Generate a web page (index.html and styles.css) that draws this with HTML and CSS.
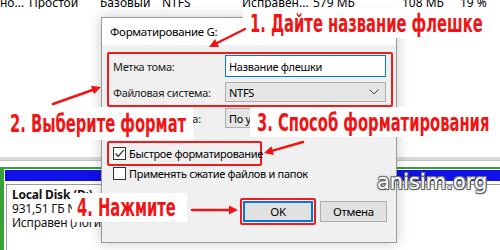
FILE: index.html
```html
<!DOCTYPE html>
<html lang="ru">
<head>
<meta charset="utf-8">
<title>Форматирование флешки</title>
<link rel="stylesheet" href="styles.css">
</head>
<body>
<div class="screen">
  <div class="app">
    <div class="list-row">
      <span class="c c1">но...</span>
      <span class="c c2">Простой</span>
      <span class="c c3">Базовый</span>
      <span class="c c4">NTFS</span>
      <span class="c c5">Исправен...</span>
      <span class="c c6">579 МБ</span>
      <span class="c c7">108 МБ</span>
      <span class="c c8">19 %</span>
    </div>
    <div class="list-rest"></div>
    <div class="splitter"></div>
    <div class="disk">
      <div class="part">
        <div class="part-bar"></div>
        <div class="part-body">
          <div class="part-name">Local Disk (D:)</div>
          <div>931,51 ГБ NTFS</div>
          <div>Исправен (Логический диск)</div>
        </div>
      </div>
    </div>
  </div>

  <div class="dialog">
    <div class="titlebar">Форматирование G:</div>
    <div class="dlg-body">
      <div class="mark mark-fields">
        <div class="field">
          <span class="flabel">Метка тома:</span>
          <div class="input">Название флешки</div>
        </div>
        <div class="field">
          <span class="flabel">Файловая система:</span>
          <div class="select">NTFS
            <svg class="chev" width="10" height="6" viewBox="0 0 10 6"><path d="M0.5 0.5 L5 5 L9.5 0.5" fill="none" stroke="#444" stroke-width="1"/></svg>
          </div>
        </div>
      </div>
      <div class="field field-plain">
        <span class="flabel">Размер кластера:</span>
        <div class="select">По умолчанию</div>
      </div>
      <div class="mark mark-check">
        <div class="check">
          <span class="box"><svg width="11" height="11" viewBox="0 0 11 11"><path d="M1.5 5.5 L4.2 8.3 L9.6 2.2" fill="none" stroke="#222" stroke-width="1.2"/></svg></span>
          <span>Быстрое форматирование</span>
        </div>
      </div>
      <div class="check check-plain">
        <span class="box"></span>
        <span>Применять сжатие файлов и папок</span>
      </div>
      <div class="buttons">
        <div class="mark mark-ok"><div class="btn btn-default">OK</div></div>
        <div class="btn">Отмена</div>
      </div>
    </div>
  </div>

  <div class="note note1"><span class="note-text">1. Дайте название флешке</span></div>
  <div class="note note2"><span class="note-text">2. Выберите формат</span></div>
  <div class="note note3"><span class="note-text">3. Способ форматирования</span></div>
  <div class="note note4"><span class="note-text">4. Нажмите</span></div>

  <svg class="arrows" width="500" height="250" viewBox="0 0 500 250">
    <g stroke="#f01414" stroke-width="2.5" fill="none" stroke-linecap="round">
      <line x1="245" y1="29" x2="217" y2="43"/>
      <line x1="53" y1="104" x2="92.5" y2="90"/>
      <line x1="303" y1="142" x2="272.7" y2="150.6"/>
      <line x1="192" y1="210" x2="229" y2="210"/>
    </g>
    <g fill="#f01414">
      <polygon points="209,47 215,39 219.1,47"/>
      <polygon points="101,87 94,94.2 91,85.8"/>
      <polygon points="264,153 271.4,146.2 273.9,154.9"/>
      <polygon points="238,210 229,205.5 229,214.5"/>
    </g>
  </svg>

  <div class="watermark">anisim.org</div>
</div>
</body>
</html>
```

FILE: styles.css
```css
* { box-sizing: border-box; }

html, body {
  margin: 0;
  padding: 0;
  background: #fff;
}

.screen {
  position: relative;
  width: 500px;
  height: 250px;
  overflow: hidden;
  font-family: "Noto Sans", "DejaVu Sans", sans-serif;
  font-size: 11px;
  color: #000;
}

/* background application */
.app {
  display: flex;
  flex-direction: column;
  height: 250px;
}

.list-row {
  flex: none;
  display: flex;
  align-items: flex-end;
  height: 9px;
  overflow: hidden;
  font-size: 12px;
}

.c {
  line-height: 12px;
  white-space: nowrap;
}
.c1 { width: 29px; }
.c2 { width: 71px; }
.c3 { width: 62px; }
.c4 { width: 80px; }
.c5 { width: 71px; }
.c6 { width: 89px; }
.c7 { width: 58px; }
.c8 { flex: 1; }

.list-rest {
  flex: none;
  height: 148px;
  background: #fff;
}

.splitter {
  flex: none;
  height: 4px;
  background: #d9d9d9;
  border-bottom: 1px solid #c2c2c2;
}

.disk {
  flex: 1;
  min-height: 0;
  overflow: hidden;
  display: flex;
  flex-direction: column;
  padding-top: 6px;
  background: #fff;
}

.part {
  flex: 1;
  display: flex;
  flex-direction: column;
  border-top: 2px solid #36a236;
  border-left: 4px solid #36a236;
}

.part-bar {
  flex: none;
  height: 11px;
  margin: 1px 0 0 1px;
  background: #1010e8;
}

.part-body {
  flex: 1;
  margin: 3px 0 0 2px;
  padding: 3px 5px 0;
  border-top: 1px solid #999;
  border-left: 1px solid #999;
  font-size: 12px;
  line-height: 14px;
  color: #111;
  letter-spacing: -0.2px;
  white-space: nowrap;
}

.part-name { font-weight: bold; }

/* dialog window */
.dialog {
  position: absolute;
  left: 101px;
  top: 17px;
  width: 296px;
  height: 226px;
  border: 1px solid #9a9a9a;
  background: #f0f0f0;
  box-shadow: 0 0 12px rgba(0, 0, 0, 0.22);
  display: flex;
  flex-direction: column;
  letter-spacing: -0.3px;
  white-space: nowrap;
}

.titlebar {
  height: 27px;
  padding-left: 8px;
  display: flex;
  align-items: center;
  background: #fff;
  font-size: 11.5px;
}

.dlg-body {
  flex: 1;
  padding: 7px 3px 0 5px;
  display: flex;
  flex-direction: column;
}

.mark {
  border: 2px solid #ee1c1c;
  border-radius: 2px;
}

.mark-fields {
  display: flex;
  flex-direction: column;
  gap: 5px;
  padding: 1px 5px 3px 4px;
}

.field {
  display: flex;
  align-items: center;
}

.flabel {
  width: 112px;
  color: #1a1a1a;
}

.input {
  flex: 1;
  height: 22px;
  display: flex;
  align-items: center;
  padding-left: 3px;
  background: #fff;
  border: 1px solid #0078d7;
}

.select {
  flex: 1;
  height: 20px;
  display: flex;
  align-items: center;
  justify-content: space-between;
  padding: 0 6px 0 3px;
  background: #e5e5e5;
  border: 1px solid #adadad;
}

.field-plain {
  margin-top: 1px;
  padding: 0 6px 0 6px;
}

.mark-check {
  margin-top: 13px;
  width: 155px;
  height: 25px;
  padding-left: 4px;
  display: flex;
  align-items: center;
}

.check {
  display: flex;
  align-items: center;
  gap: 3px;
}

.check-plain {
  margin-top: 1px;
  padding-left: 6px;
  height: 13px;
}

.box {
  width: 13px;
  height: 13px;
  flex: none;
  border: 1px solid #333;
  background: #fff;
  display: flex;
  align-items: center;
  justify-content: center;
}

.buttons {
  margin-top: 18px;
  margin-left: 133px;
  display: flex;
  align-items: center;
  gap: 4px;
}

.mark-ok {
  padding: 1px;
}

.btn {
  width: 67px;
  height: 21px;
  display: flex;
  align-items: center;
  justify-content: center;
  background: #e1e1e1;
  border: 1px solid #adadad;
  font-size: 11.5px;
}

.btn-default {
  width: 70px;
  border: 2px solid #0078d7;
}

/* annotations */
.note {
  position: absolute;
  background: #fff;
  color: #f01414;
  font-family: "DejaVu Sans Condensed", "DejaVu Sans", sans-serif;
  font-stretch: condensed;
  font-weight: bold;
  font-size: 25px;
  line-height: 1;
  white-space: nowrap;
  display: flex;
  align-items: center;
}

.note-text {
  display: inline-block;
  transform: scaleX(0.655);
  transform-origin: left center;
}

.note1 { left: 243px; top: 8px; width: 257px; height: 30px; padding-left: 7px; }
.note2 { left: 0; top: 107px; width: 193px; height: 33px; padding-left: 10px; }
.note3 { left: 250px; top: 107px; width: 250px; height: 30px; padding-left: 7px; }
.note4 { left: 72px; top: 193px; width: 115px; height: 29px; padding-left: 5px; }

.arrows {
  position: absolute;
  left: 0;
  top: 0;
}

.watermark {
  position: absolute;
  left: 377px;
  top: 170px;
  font-family: "DejaVu Sans", sans-serif;
  font-size: 21px;
  color: #fff;
  text-shadow: 1px 1px 0 #555, -1px -1px 0 #777, 1px -1px 0 #777, -1px 1px 0 #777, 0 0 3px #333;
}
```
